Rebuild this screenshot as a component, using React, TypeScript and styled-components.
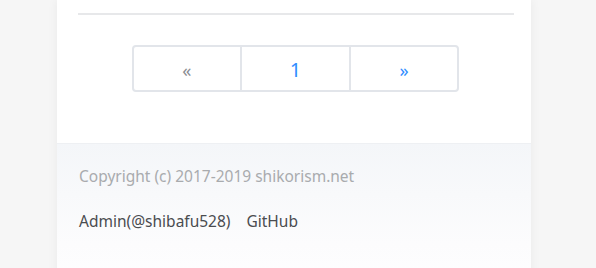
import styled, { createGlobalStyle } from 'styled-components';

const GlobalStyle = createGlobalStyle`
  html, body {
    margin: 0;
    padding: 0;
    background: #f6f6f6;
    font-family: "Segoe UI", "Noto Sans", "Open Sans", sans-serif;
  }
`;

const Page = styled.div`
  width: 596px;
  height: 268px;
  overflow: hidden;
`;

const Card = styled.main`
  width: 474px;
  margin-left: 57px;
  background: #fff;
  box-shadow: 0 0 10px rgba(0, 0, 0, 0.06);
  height: 300px;
  display: flex;
  flex-direction: column;
`;

const Body = styled.section`
  padding: 13px 17px 0 21px;
  height: 130px;
`;

const Divider = styled.hr`
  margin: 0;
  border: 0;
  height: 2px;
  background: #e7e8ea;
`;

const Pager = styled.nav`
  display: flex;
  width: 327px;
  height: 47px;
  margin: 30px 0 0 54px;
  border: 2px solid #e2e5ea;
  border-radius: 4px;
  box-sizing: border-box;
`;

const PageItem = styled.a<{ $muted?: boolean; $large?: boolean; $width: number }>`
  width: ${p => p.$width}px;
  display: flex;
  align-items: center;
  justify-content: center;
  color: ${p => (p.$muted ? '#8a8d92' : '#2f8cff')};
  font-size: ${p => (p.$large ? '20px' : '18px')};
  text-decoration: none;
  padding-top: 2px;
  & + & {
    border-left: 2px solid #e2e5ea;
  }
`;

const Footer = styled.footer`
  flex: 1;
  border-top: 1px solid #eef0f3;
  background: linear-gradient(to bottom, #f4f6f9 0%, #fcfcfd 100px, #ffffff 160px);
  padding: 21px 21px 0 22px;
`;

const Copy = styled.p`
  margin: 0;
  color: #a9abae;
  font-size: 15.5px;
  line-height: 22px;
`;

const Links = styled.div`
  display: flex;
  gap: 16px;
  margin-top: 23px;
`;

const FooterLink = styled.a`
  color: #4a4c50;
  font-size: 15.5px;
  line-height: 22px;
  text-decoration: none;
`;

export default function App() {
  return (
    <Page>
      <GlobalStyle />
      <Card>
        <Body>
          <Divider />
          <Pager>
            <PageItem $muted $width={107}>«</PageItem>
            <PageItem $large $width={109}>1</PageItem>
            <PageItem $width={107}>»</PageItem>
          </Pager>
        </Body>
        <Footer>
          <Copy>Copyright (c) 2017-2019 shikorism.net</Copy>
          <Links>
            <FooterLink href="#">Admin(@shibafu528)</FooterLink>
            <FooterLink href="#">GitHub</FooterLink>
          </Links>
        </Footer>
      </Card>
    </Page>
  );
}
